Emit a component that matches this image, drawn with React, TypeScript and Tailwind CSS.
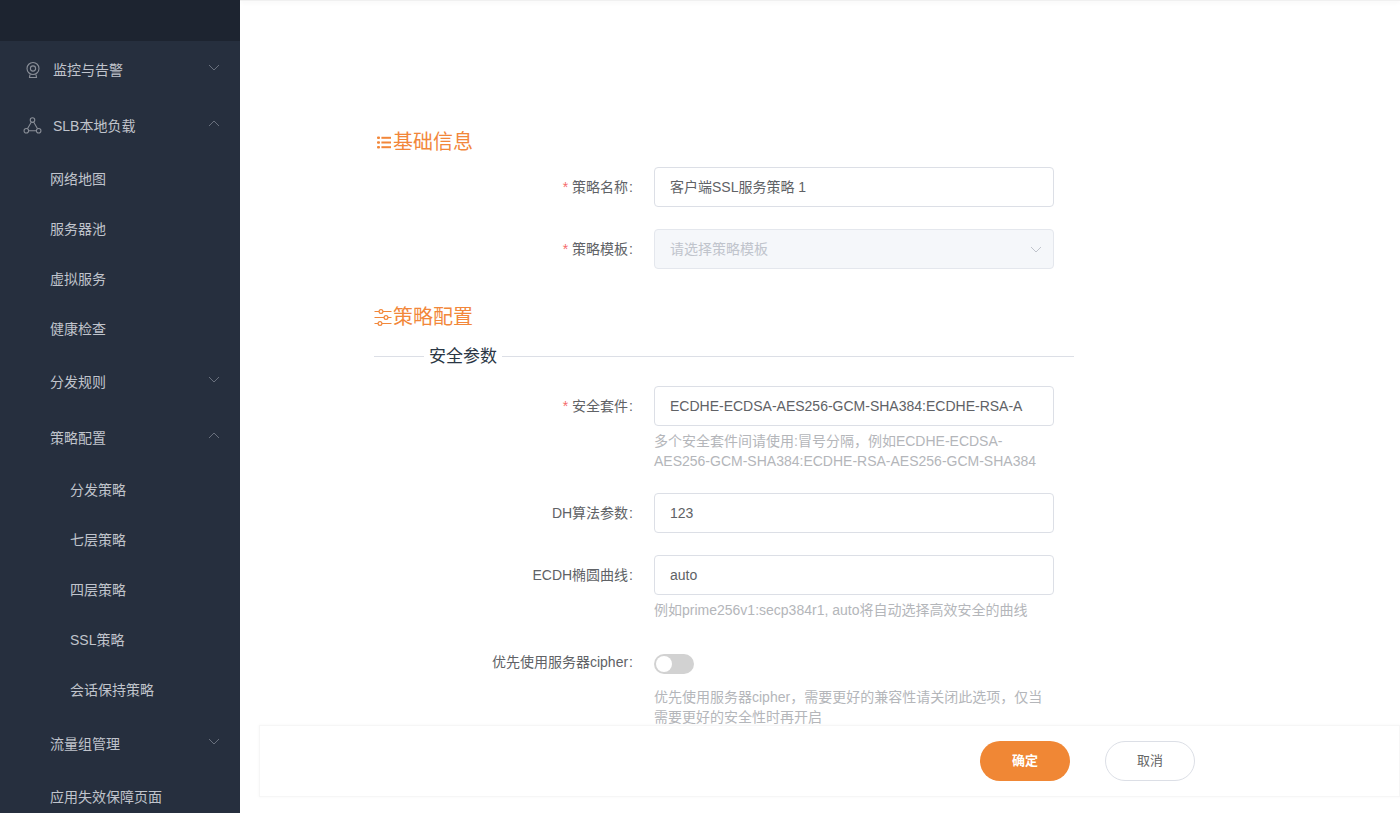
type MenuItem = {
  label: string;
  open?: boolean;
  indent?: "top" | "sub" | "leaf";
  icon?: "camera" | "nodes";
};

const menu: MenuItem[] = [
  { label: "监控与告警", open: false, indent: "top", icon: "camera" },
  { label: "SLB本地负载", open: true, indent: "top", icon: "nodes" },
  { label: "网络地图" },
  { label: "服务器池" },
  { label: "虚拟服务" },
  { label: "健康检查" },
  { label: "分发规则", open: false },
  { label: "策略配置", open: true },
  { label: "分发策略", indent: "leaf" },
  { label: "七层策略", indent: "leaf" },
  { label: "四层策略", indent: "leaf" },
  { label: "SSL策略", indent: "leaf" },
  { label: "会话保持策略", indent: "leaf" },
  { label: "流量组管理", open: false },
  { label: "应用失效保障页面" },
];

const suiteHint = "多个安全套件间请使用:冒号分隔\uFF0C例如ECDHE-ECDSA-";
const cipherHint = "优先使用服务器cipher\uFF0C需要更好的兼容性请关闭此选项\uFF0C仅当";

function CameraIcon() {
  return (
    <svg width="18" height="18" viewBox="0 0 18 18" fill="none" stroke="#8a8f98" strokeWidth="1.1">
      <circle cx="9" cy="7.5" r="6" />
      <circle cx="9" cy="7.5" r="2.6" />
      <path d="M6 13.5 L5.5 16.5 H12.5 L12 13.5" />
    </svg>
  );
}

function NodesIcon() {
  return (
    <svg width="20" height="20" viewBox="0 0 20 20" fill="none" stroke="#8a8f98" strokeWidth="1.1">
      <circle cx="10" cy="3.8" r="2.4" />
      <circle cx="3.5" cy="15" r="2.4" />
      <circle cx="16.5" cy="15" r="2.4" />
      <path d="M8.8 5.9 L4.7 12.9 M11.2 5.9 L15.3 12.9 M5.9 15 H14.1" />
    </svg>
  );
}

function Chevron({ up, className = "" }: { up?: boolean; className?: string }) {
  return (
    <svg width="12" height="7" viewBox="0 0 12 7" fill="none" stroke="currentColor" strokeWidth="1" className={className}>
      <path d={up ? "M1 6 L6 1 L11 6" : "M1 1 L6 6 L11 1"} />
    </svg>
  );
}

function SideRow({ item }: { item: MenuItem }) {
  const hasArrow = item.open !== undefined;
  return (
    <div
      className={`flex items-center text-sm text-[#c0c4cc] ${hasArrow ? "h-14" : "h-[50px]"} ${
        item.indent === "leaf" ? "pb-[2px] pl-[70px]" : item.indent === "top" ? "pl-[23px]" : "pl-[50px]"
      }`}
    >
      {item.icon && (
        <span className="mr-[11px] flex w-[19px] justify-center">
          {item.icon === "camera" ? <CameraIcon /> : <NodesIcon />}
        </span>
      )}
      <span>{item.label}</span>
      {hasArrow && <Chevron up={item.open} className="mb-[5px] ml-auto mr-[20px] text-[#69707d]" />}
    </div>
  );
}

function Sidebar() {
  return (
    <aside className="h-[813px] w-[240px] shrink-0 overflow-hidden bg-[#262f3e]">
      <div className="h-[41px] bg-[#1d2430]" />
      <div className="pt-px">
        {menu.map((item) => (
          <SideRow key={item.label} item={item} />
        ))}
      </div>
    </aside>
  );
}

function ListIcon() {
  return (
    <svg width="14" height="13" viewBox="0 0 14 13" fill="#f2873a" className="ml-[3px]">
      <rect x="0" y="0.5" width="3" height="2.6" rx="1" />
      <rect x="0" y="5.2" width="3" height="2.6" rx="1" />
      <rect x="0" y="9.9" width="3" height="2.6" rx="1" />
      <rect x="4.4" y="0.8" width="9.6" height="2" />
      <rect x="4.4" y="5.5" width="9.6" height="2" />
      <rect x="4.4" y="10.2" width="9.6" height="2" />
    </svg>
  );
}

function SlidersIcon() {
  return (
    <svg width="18" height="17" viewBox="0 0 18 17" fill="none" stroke="#f2873a" strokeWidth="1.2">
      <path d="M0.5 2.5 H5 M9 2.5 H17.5 M0.5 8.5 H10 M14 8.5 H17.5 M0.5 14.5 H4 M8 14.5 H17.5" />
      <circle cx="7" cy="2.5" r="1.9" />
      <circle cx="12" cy="8.5" r="1.9" />
      <circle cx="6" cy="14.5" r="1.9" />
    </svg>
  );
}

function Heading({ icon, title }: { icon: React.ReactNode; title: string }) {
  return (
    <div className="flex h-7 items-center text-xl text-[#f2873a]">
      <span className="flex w-[19px] shrink-0 items-center">{icon}</span>
      {title}
    </div>
  );
}

function Field({
  label,
  required,
  children,
  className = "",
}: {
  label: string;
  required?: boolean;
  children: React.ReactNode;
  className?: string;
}) {
  return (
    <div className={`flex ${className}`}>
      <label className="flex h-10 w-[260px] shrink-0 items-center justify-end text-sm text-[#606266]">
        {required && <span className="mr-1 text-[#f56c6c]">*</span>}
        {label}
        <span className="mx-px">:</span>
      </label>
      <div className="ml-5 w-[400px]">{children}</div>
    </div>
  );
}

function TextInput({ value }: { value: string }) {
  return (
    <div className="flex h-10 items-center overflow-hidden whitespace-nowrap rounded border border-[#dcdfe6] bg-white px-[15px] text-sm text-[#606266]">
      {value}
    </div>
  );
}

function Hint({ children }: { children: React.ReactNode }) {
  return <p className="mt-[5px] text-sm leading-5 text-[#b4b6ba]">{children}</p>;
}

export default function App() {
  return (
    <div className="flex h-[813px] w-[1400px] overflow-hidden bg-white font-['Liberation_Sans','Noto_Sans_CJK_SC',sans-serif]">
      <Sidebar />
      <main className="relative flex-1 overflow-hidden">
        <div className="h-px bg-[#f0f0f0] shadow-[0_1px_4px_rgba(0,0,0,0.1)]" />
        <div className="ml-[134px] w-[700px] pt-[127px]">
          <Heading icon={<ListIcon />} title="基础信息" />
          <Field label="策略名称" required className="mt-[11px]">
            <TextInput value="客户端SSL服务策略 1" />
          </Field>
          <Field label="策略模板" required className="mt-[22px]">
            <div className="flex h-10 items-center justify-between rounded border border-[#e4e7ed] bg-[#f5f7fa] pl-[15px] pr-[11px] text-sm text-[#c0c4cc]">
              请选择策略模板
              <Chevron />
            </div>
          </Field>
          <div className="mt-[34px]">
            <Heading icon={<SlidersIcon />} title="策略配置" />
          </div>
          <div className="mt-[13px] flex h-6 items-center">
            <div className="h-px w-[50px] bg-[#dcdfe6]" />
            <span className="px-[5px] pt-px text-[17px] text-[#2a3644]">安全参数</span>
            <div className="h-px flex-1 bg-[#dcdfe6]" />
          </div>
          <Field label="安全套件" required className="mt-[18px]">
            <TextInput value="ECDHE-ECDSA-AES256-GCM-SHA384:ECDHE-RSA-A" />
            <Hint>
              {suiteHint}
              <br />
              AES256-GCM-SHA384:ECDHE-RSA-AES256-GCM-SHA384
            </Hint>
          </Field>
          <Field label="DH算法参数" className="mt-[22px]">
            <TextInput value="123" />
          </Field>
          <Field label="ECDH椭圆曲线" className="mt-[22px]">
            <TextInput value="auto" />
            <Hint>例如prime256v1:secp384r1, auto将自动选择高效安全的曲线</Hint>
          </Field>
          <Field label="优先使用服务器cipher" className="mt-[22px]">
            <div className="flex h-10 items-center pt-1">
              <div className="flex h-5 w-10 items-center rounded-full bg-[#d2d2d2] pl-[2px]">
                <div className="h-4 w-4 rounded-full bg-white" />
              </div>
            </div>
            <Hint>
              {cipherHint}
              <br />
              需要更好的安全性时再开启
            </Hint>
          </Field>
        </div>
        <div className="absolute bottom-4 left-[19px] right-0 flex h-[72px] items-center border border-[#f6f6f6] bg-white pl-[720px] shadow-[0_0_3px_rgba(0,0,0,0.04)]">
          <button className="h-10 w-[90px] rounded-full bg-[#f08735] text-[13px] font-bold text-white">确定</button>
          <button className="ml-[35px] h-10 w-[90px] rounded-full border border-[#dcdfe6] bg-white text-[13px] text-[#666]">
            取消
          </button>
        </div>
      </main>
    </div>
  );
}
